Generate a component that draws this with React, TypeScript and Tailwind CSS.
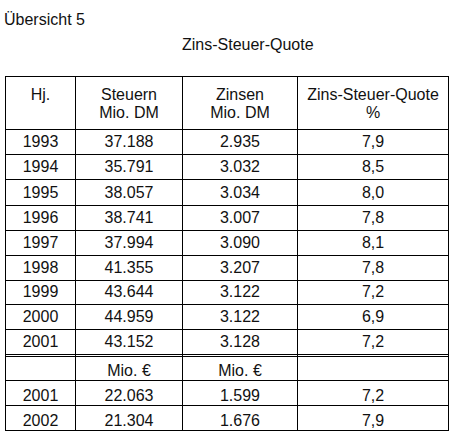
import React from "react";

const rows: [string, string, string, string][] = [
  ["1993", "37.188", "2.935", "7,9"],
  ["1994", "35.791", "3.032", "8,5"],
  ["1995", "38.057", "3.034", "8,0"],
  ["1996", "38.741", "3.007", "7,8"],
  ["1997", "37.994", "3.090", "8,1"],
  ["1998", "41.355", "3.207", "7,8"],
  ["1999", "43.644", "3.122", "7,2"],
  ["2000", "44.959", "3.122", "6,9"],
  ["2001", "43.152", "3.128", "7,2"],
];

const rowsEuro: [string, string, string, string][] = [
  ["2001", "22.063", "1.599", "7,2"],
  ["2002", "21.304", "1.676", "7,9"],
];

function rowClass(ri: number): string {
  if (ri === rows.length - 1)
    return "h-[27px] pt-[3px] border-r border-b-[3px] border-double border-black text-center";
  if (ri === 2) return "h-[26px] pt-[4px] border-r border-b border-black text-center";
  if (ri === 6) return "h-[24px] pt-[2px] border-r border-b border-black text-center";
  return "h-[25px] pt-[3px] border-r border-b border-black text-center";
}

export default function App() {
  return (
    <div
      className="w-[454px] h-[436px] bg-white text-[#111] text-[16px] leading-[18px]"
      style={{ fontFamily: '"Liberation Sans", Arial, sans-serif' }}
    >
      <div className="pt-[11px] pl-[4px]">Übersicht 5</div>
      <div className="mt-[7px] pl-[182px]">Zins-Steuer-Quote</div>
      <div className="mt-[22px] ml-[5px] w-[444px] grid grid-cols-[70px_107px_115px_151px] border-l border-t border-black">
        {[
          ["Hj.", ""],
          ["Steuern", "Mio. DM"],
          ["Zinsen", "Mio. DM"],
          ["Zins-Steuer-Quote", "%"],
        ].map(([a, b], i) => (
          <div
            key={"h" + i}
            className="h-[53px] pt-[9px] border-r border-b border-black text-center"
          >
            <div>{a}</div>
            {b && <div>{b}</div>}
          </div>
        ))}
        {rows.map((r, ri) =>
          r.map((c, ci) => (
            <div key={`r${ri}-${ci}`} className={rowClass(ri)}>
              {c}
            </div>
          ))
        )}
        {["", "Mio. €", "Mio. €", ""].map((c, ci) => (
          <div
            key={"m" + ci}
            className="h-[24px] pt-[5px] border-r border-b border-black text-center"
          >
            {c}
          </div>
        ))}
        {rowsEuro.map((r, ri) =>
          r.map((c, ci) => (
            <div
              key={`e${ri}-${ci}`}
              className="h-[25px] pt-[6px] border-r border-b border-black text-center"
            >
              {c}
            </div>
          ))
        )}
      </div>
    </div>
  );
}
